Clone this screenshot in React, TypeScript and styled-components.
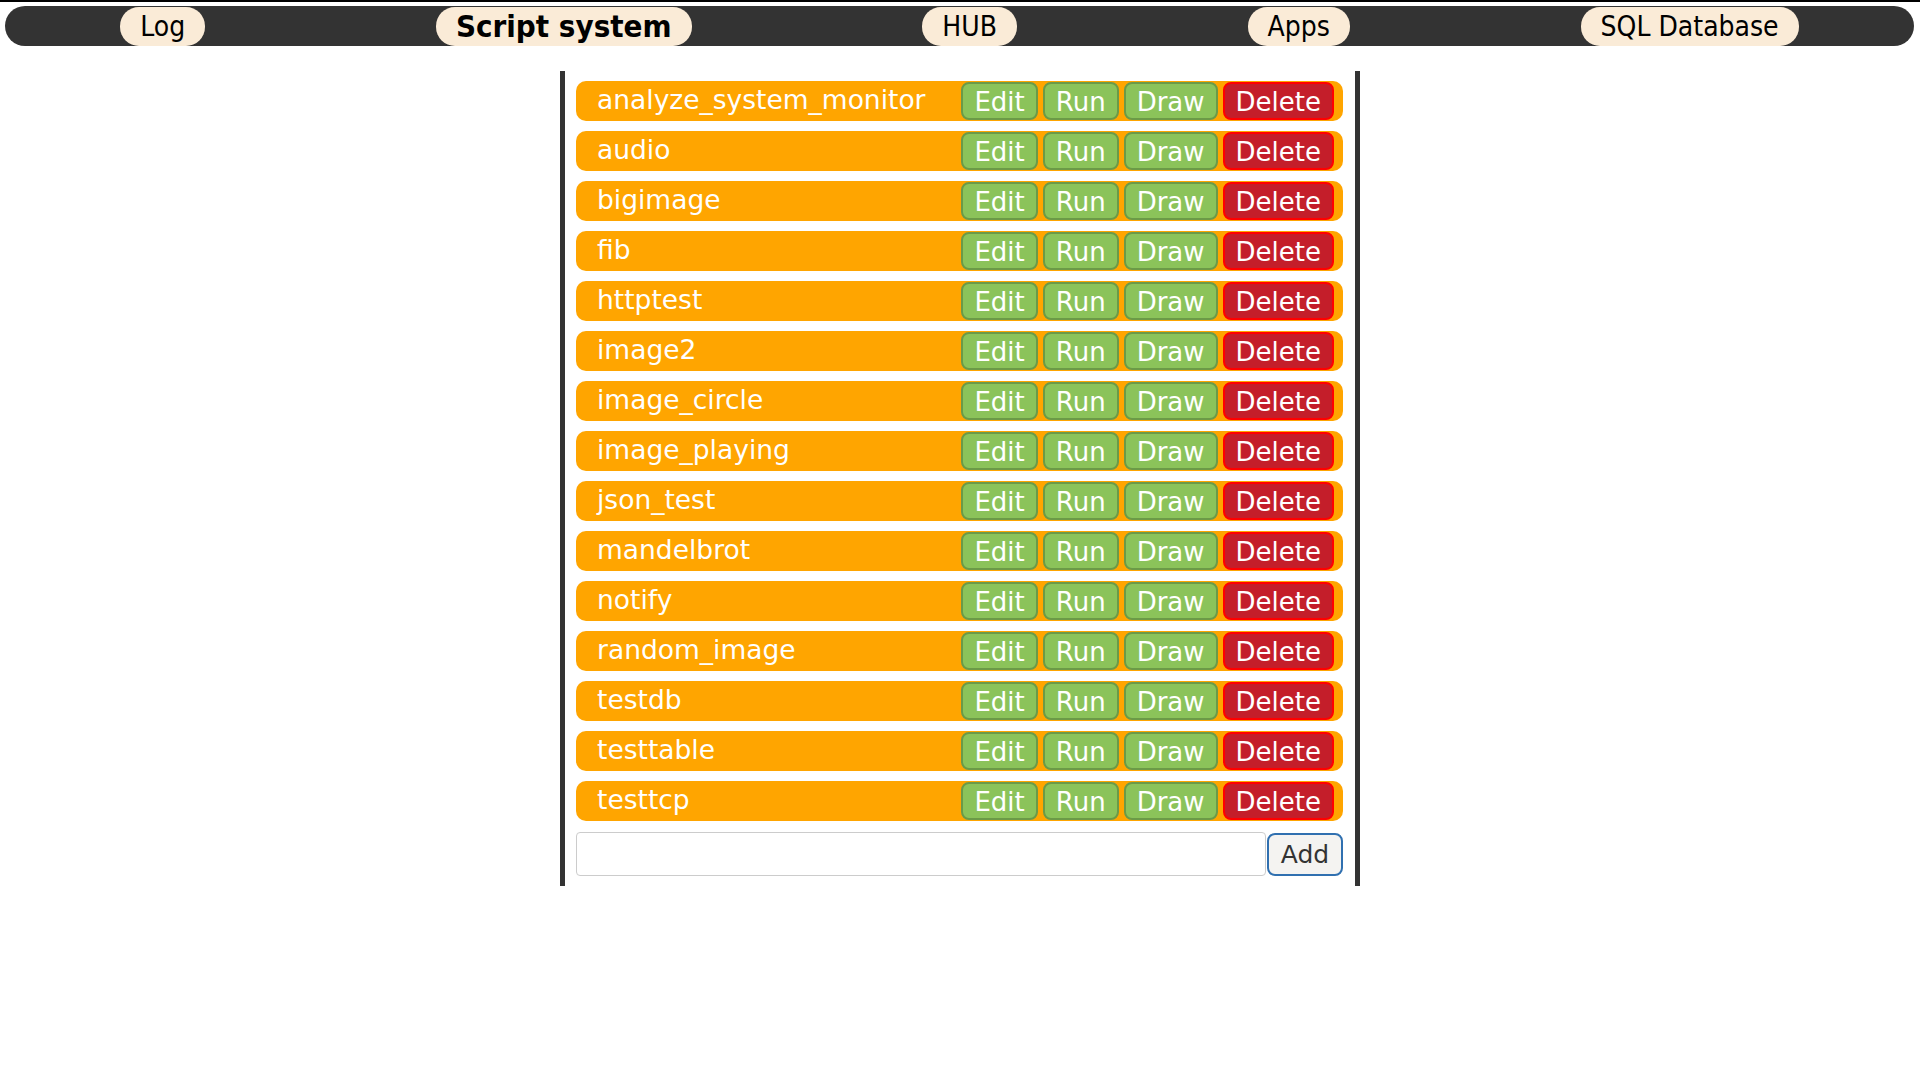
import React from 'react';
import styled, { createGlobalStyle } from 'styled-components';

const GlobalStyle = createGlobalStyle`
  html, body {
    margin: 0;
    padding: 0;
    background: #ffffff;
    font-family: 'DejaVu Sans', 'Liberation Sans', sans-serif;
  }
  * {
    box-sizing: border-box;
  }
`;

const TopRule = styled.div`
  height: 2px;
  background: #000000;
`;

const NavBar = styled.nav`
  margin: 4px 6px 0 5px;
  height: 40px;
  border-radius: 20px;
  background: #333333;
  display: flex;
  justify-content: space-around;
  align-items: flex-end;
`;

const NavPill = styled.a<{ $active?: boolean }>`
  display: block;
  height: 39px;
  line-height: 39px;
  padding: 0 20px;
  border-radius: 19px;
  background: #faebd7;
  color: #000000;
  text-decoration: none;
  font-family: 'DejaVu Sans Condensed', 'DejaVu Sans', sans-serif;
  font-stretch: condensed;
  font-size: ${(p) => (p.$active ? '31px' : '28px')};
  font-weight: ${(p) => (p.$active ? 700 : 400)};
  cursor: pointer;
`;

const Panel = styled.main`
  width: 800px;
  margin: 25px auto 0;
  padding: 10px 12px 10px 11px;
  border-left: 5px solid #333333;
  border-right: 5px solid #333333;
`;

const ScriptRow = styled.div`
  display: flex;
  align-items: center;
  height: 40px;
  margin-bottom: 10px;
  padding: 0 9px 0 21px;
  border-radius: 10px;
  background: #ffa500;
`;

const ScriptName = styled.span`
  flex: 1;
  color: #ffffff;
  font-size: 26.5px;
  line-height: 1;
  margin-top: -2px;
`;

const ActionButton = styled.button<{ $danger?: boolean }>`
  height: 38px;
  margin-left: 5px;
  padding: 2px 11px 0;
  border-radius: 8px;
  border: 2px solid ${(p) => (p.$danger ? '#ff0000' : '#6b9a47')};
  background: ${(p) => (p.$danger ? '#c41e2a' : '#8bc35a')};
  color: #ffffff;
  font-family: 'DejaVu Sans', sans-serif;
  font-size: 26px;
  line-height: 1;
  cursor: pointer;
`;

const AddRow = styled.div`
  display: flex;
  align-items: center;
  margin-top: 11px;
`;

const NameInput = styled.input`
  flex: 1;
  height: 44px;
  border: 1px solid #cccccc;
  border-radius: 4px;
  background: #ffffff;
`;

const AddButton = styled.button`
  width: 76px;
  height: 43px;
  margin-left: 1px;
  border: 2px solid #3070b0;
  border-radius: 8px;
  background: #f4f3f1;
  color: #333333;
  font-family: 'DejaVu Sans', sans-serif;
  font-size: 25px;
  cursor: pointer;
`;

const navItems = ['Log', 'Script system', 'HUB', 'Apps', 'SQL Database'];

const scripts = [
  'analyze_system_monitor',
  'audio',
  'bigimage',
  'fib',
  'httptest',
  'image2',
  'image_circle',
  'image_playing',
  'json_test',
  'mandelbrot',
  'notify',
  'random_image',
  'testdb',
  'testtable',
  'testtcp',
];

const App: React.FC = () => (
  <>
    <GlobalStyle />
    <TopRule />
    <NavBar>
      {navItems.map((item) => (
        <NavPill key={item} $active={item === 'Script system'}>
          {item}
        </NavPill>
      ))}
    </NavBar>
    <Panel>
      {scripts.map((name) => (
        <ScriptRow key={name}>
          <ScriptName>{name}</ScriptName>
          <ActionButton>Edit</ActionButton>
          <ActionButton>Run</ActionButton>
          <ActionButton>Draw</ActionButton>
          <ActionButton $danger>Delete</ActionButton>
        </ScriptRow>
      ))}
      <AddRow>
        <NameInput />
        <AddButton>Add</AddButton>
      </AddRow>
    </Panel>
  </>
);

export default App;
